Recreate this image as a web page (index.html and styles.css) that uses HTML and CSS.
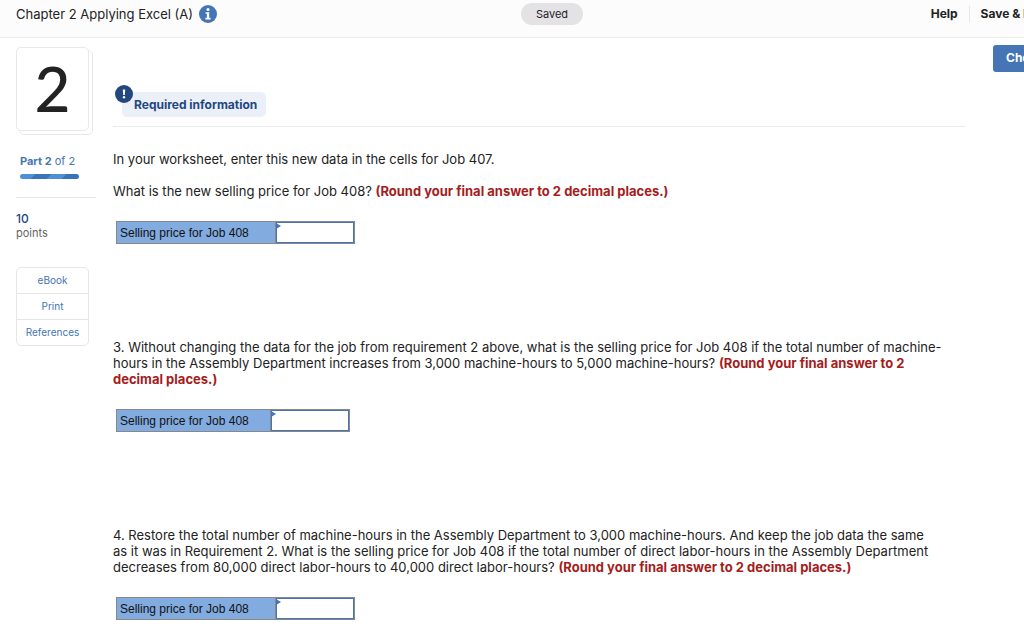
FILE: index.html
```html
<!DOCTYPE html>
<html lang="en">
<head>
    <meta charset="UTF-8">
    <meta name="viewport" content="width=device-width, initial-scale=1.0">
    <title>Chapter 2 Applying Excel (A)</title>
    <link rel="stylesheet" href="styles.css">
</head>
<body>

    <header class="top-bar">
        <div class="title">
            <h1>Chapter 2 Applying Excel (A)</h1>
            <button type="button" class="info-button" aria-label="Assignment information">
                <svg viewBox="0 0 18 18" width="18" height="18">
                    <circle cx="9" cy="9" r="9" fill="#4575b4"/>
                    <circle cx="9" cy="4.4" r="1.5" fill="#fff"/>
                    <path d="M6.6 7.2h3.6v5.6h1.4v1.6H6.4v-1.6h1.5V8.8H6.6z" fill="#fff"/>
                </svg>
            </button>
        </div>
        <span class="status">Saved</span>
        <nav class="top-links">
            <a href="#">Help</a>
            <a href="#">Save &amp; Exit</a>
        </nav>
    </header>

    <div class="page">
        <!-- Left Column: question number and tools -->
        <aside class="sidebar">
            <div class="number-card">2</div>
            <div class="part">
                <strong>Part 2</strong> of 2
                <div class="part-bar"></div>
            </div>
            <div class="points"><span>10</span>points</div>
            <nav class="tools">
                <a href="#">eBook</a>
                <a href="#">Print</a>
                <a href="#">References</a>
            </nav>
        </aside>

        <!-- Question -->
        <main class="question">
            <div class="required">
                <h2>Required information</h2>
                <svg class="alert-icon" viewBox="0 0 18 18" width="18" height="18">
                    <circle cx="9" cy="9" r="9" fill="#22477f"/>
                    <path d="M7.8 4.6h2.4l-.4 5.4H8.2z" fill="#fff"/>
                    <circle cx="9" cy="12.2" r="1.2" fill="#fff"/>
                </svg>
            </div>

            <section class="step">
                <p>In your worksheet, enter this new data in the cells for Job 407.</p>
                <p>What is the new selling price for Job 408? <strong>(Round your final answer to 2 decimal places.)</strong></p>
                <table class="answer">
                    <tr>
                        <th scope="row"><label for="price2">Selling price for Job 408</label></th>
                        <td><input type="text" id="price2"></td>
                    </tr>
                </table>
            </section>

            <section class="step">
                <p>3. Without changing the data for the job from requirement 2 above, what is the selling price for Job 408 if the total number of machine-<br>hours in the Assembly Department increases from 3,000 machine-hours to 5,000 machine-hours? <strong>(Round your final answer to 2<br>decimal places.)</strong></p>
                <table class="answer narrow">
                    <tr>
                        <th scope="row"><label for="price3">Selling price for Job 408</label></th>
                        <td><input type="text" id="price3"></td>
                    </tr>
                </table>
            </section>

            <section class="step">
                <p>4. Restore the total number of machine-hours in the Assembly Department to 3,000 machine-hours. And keep the job data the same<br>as it was in Requirement 2. What is the selling price for Job 408 if the total number of direct labor-hours in the Assembly Department<br>decreases from 80,000 direct labor-hours to 40,000 direct labor-hours? <strong>(Round your final answer to 2 decimal places.)</strong></p>
                <table class="answer">
                    <tr>
                        <th scope="row"><label for="price4">Selling price for Job 408</label></th>
                        <td><input type="text" id="price4"></td>
                    </tr>
                </table>
            </section>
        </main>

        <button type="button" class="check-button">Check my work</button>
    </div>

</body>
</html>
```
FILE: styles.css
```css
/* General Styles */
* {
    box-sizing: border-box;
}

html {
    overflow-x: hidden;
}

body {
    font-family: 'Inter', sans-serif;
    font-size: 13px;
    line-height: 16px;
    margin: 0;
    min-width: 1104px;
    background: #fff;
    color: #222;
}

a {
    text-decoration: none;
    color: inherit;
}

/* Header */
.top-bar {
    display: grid;
    grid-template-columns: 1fr auto 1fr;
    align-items: center;
    padding: 3px 16px 12px;
    background: #fcfcfc;
    border-bottom: 1px solid #ebebeb;
}

.title {
    display: flex;
    align-items: center;
    gap: 6px;
}

.title h1 {
    margin: 0;
    font-size: 13px;
    font-weight: 400;
}

.info-button {
    display: flex;
    padding: 0;
    border: none;
    background: none;
    cursor: pointer;
}

.status {
    padding: 3px 15px;
    border-radius: 11px;
    background: #e4e2e5;
    font-size: 11px;
}

.top-links {
    display: flex;
    justify-content: flex-end;
    padding-right: 43px;
    font-size: 12px;
    font-weight: 700;
}

.top-links a + a {
    margin-left: 11px;
    padding-left: 11px;
    border-left: 1px solid #e6e6e6;
}

.page {
    display: grid;
    grid-template-columns: 80px 1fr 111px;
    align-items: start;
    padding-left: 16px;
}

/* Left Column */
.sidebar {
    padding-top: 9px;
}

.number-card {
    position: relative;
    width: 73px;
    height: 84px;
    border: 1px solid #e8e8e8;
    border-radius: 5px;
    background: #fff;
    font-family: 'Lato', sans-serif;
    font-size: 62px;
    font-weight: 500;
    line-height: 80px;
    text-align: center;
}

.number-card::after {
    content: "";
    position: absolute;
    inset: 2px -5px -5px 2px;
    z-index: -1;
    border: 1px solid #e8e8e8;
    border-radius: 5px;
}

.part {
    padding: 22px 0 18px 4px;
    border-bottom: 1px solid #e6e6e6;
    color: #4575b4;
    font-size: 11px;
}

.part-bar {
    width: 59px;
    height: 5px;
    margin-top: 5px;
    border-radius: 3px;
    background: repeating-linear-gradient(135deg, #4f8fd3 0 11px, #3a74b8 11px 22px);
}

.points {
    padding-top: 13px;
    color: #666;
    font-size: 11px;
    line-height: 15px;
}

.points span {
    display: block;
    color: #22477f;
    font-size: 12px;
    font-weight: 500;
}

.tools {
    width: 73px;
    margin-top: 26px;
    border: 1px solid #e6e6e6;
    border-radius: 5px;
    color: #4575b4;
    font-size: 10px;
    line-height: 15px;
    text-align: center;
}

.tools a {
    display: block;
    padding: 5px 0;
}

.tools a + a {
    border-top: 1px solid #e6e6e6;
}

/* Question */
.question {
    padding: 54px 28px 0 17px;
}

.required {
    position: relative;
    padding: 0 0 9px 9px;
    border-bottom: 1px solid #ebebeb;
}

.required h2 {
    width: fit-content;
    margin: 0;
    padding: 5px 9px 4px 12px;
    border-radius: 5px;
    background: #ebeff8;
    color: #22477f;
    font-size: 12px;
    font-weight: 700;
}

.alert-icon {
    position: absolute;
    top: -7px;
    left: 2px;
}

.step {
    min-height: 188px;
    padding-top: 24px;
}

.step:last-child {
    min-height: 0;
}

.step p {
    margin: 0 0 16px;
    white-space: nowrap;
}

.step strong {
    color: #a51c1c;
}

.answer {
    margin: 22px 0 0 3px;
    border-collapse: collapse;
    font-family: 'Liberation Sans', sans-serif;
    font-size: 12px;
}

.answer th {
    width: 159px;
    padding: 0 3px;
    border: 1px solid #888;
    background: #82abe0;
    color: #111;
    font-weight: 400;
    text-align: left;
}

.answer.narrow th {
    width: 154px;
}

.answer td {
    position: relative;
    padding: 0;
    border: 1px solid #888;
}

/* Corner marker of an answer cell */
.answer td::before {
    content: "";
    position: absolute;
    top: 1px;
    left: 0;
    border: 3px solid transparent;
    border-left: 5px solid #4575b4;
    border-right: none;
}

.answer input {
    display: block;
    width: 78px;
    height: 21px;
    padding: 0 4px;
    border: 1px solid #4575b4;
    outline: none;
    font: inherit;
}

.check-button {
    margin-top: 7px;
    padding: 5px 0 6px 13px;
    border: none;
    border-radius: 3px 0 0 3px;
    background: #4575b4;
    color: #fff;
    font: 700 12px/16px 'Inter', sans-serif;
    text-align: left;
    cursor: pointer;
}
```
